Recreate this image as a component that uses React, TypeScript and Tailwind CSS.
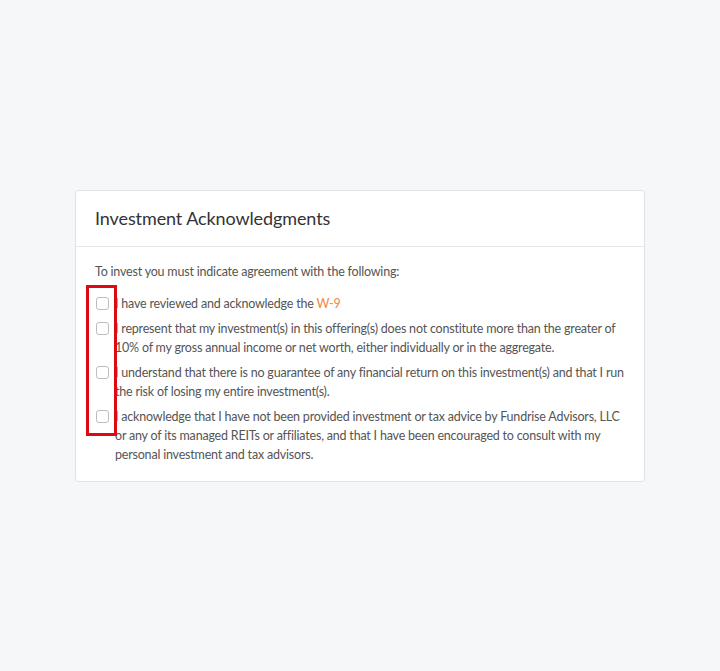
const items: { text: React.ReactNode }[] = [
  {
    text: (
      <>
        I have reviewed and acknowledge the{" "}
        <a href="#" className="text-[#f0893f]">
          W-9
        </a>
      </>
    ),
  },
  {
    text: "I represent that my investment(s) in this offering(s) does not constitute more than the greater of 10% of my gross annual income or net worth, either individually or in the aggregate.",
  },
  {
    text: "I understand that there is no guarantee of any financial return on this investment(s) and that I run the risk of losing my entire investment(s).",
  },
  {
    text: "I acknowledge that I have not been provided investment or tax advice by Fundrise Advisors, LLC or any of its managed REITs or affiliates, and that I have been encouraged to consult with my personal investment and tax advisors.",
  },
];

export default function App() {
  return (
    <div className="flex h-screen items-center justify-center bg-[#f6f7f9] font-['Lato',sans-serif]">
      <div className="w-[570px] rounded-[4px] border border-[#dfe2e6] bg-white">
        <div className="flex h-[56px] items-center border-b border-[#e3e6ea] px-[19px]">
          <h2 className="text-[18px] tracking-[-0.1px] text-[#333]">Investment Acknowledgments</h2>
        </div>
        <div className="px-[19px] pt-[15px] pb-[17px] text-[12.5px] leading-[19px] tracking-[-0.2px] text-[#555]">
          <p className="mb-[13px]">To invest you must indicate agreement with the following:</p>
          <div className="relative flex flex-col gap-[6px]">
            {items.map((item, i) => (
              <label key={i} className="flex">
                <span className="mt-[3px] ml-px mr-[6px] h-[13px] w-[13px] shrink-0 rounded-[3px] border border-[#bdbdbd] bg-white" />
                <span>{item.text}</span>
              </label>
            ))}
            <div className="absolute left-[-9px] top-[-9px] h-[151px] w-[31px] border-[3px] border-[#dd0a14]" />
          </div>
        </div>
      </div>
    </div>
  );
}
